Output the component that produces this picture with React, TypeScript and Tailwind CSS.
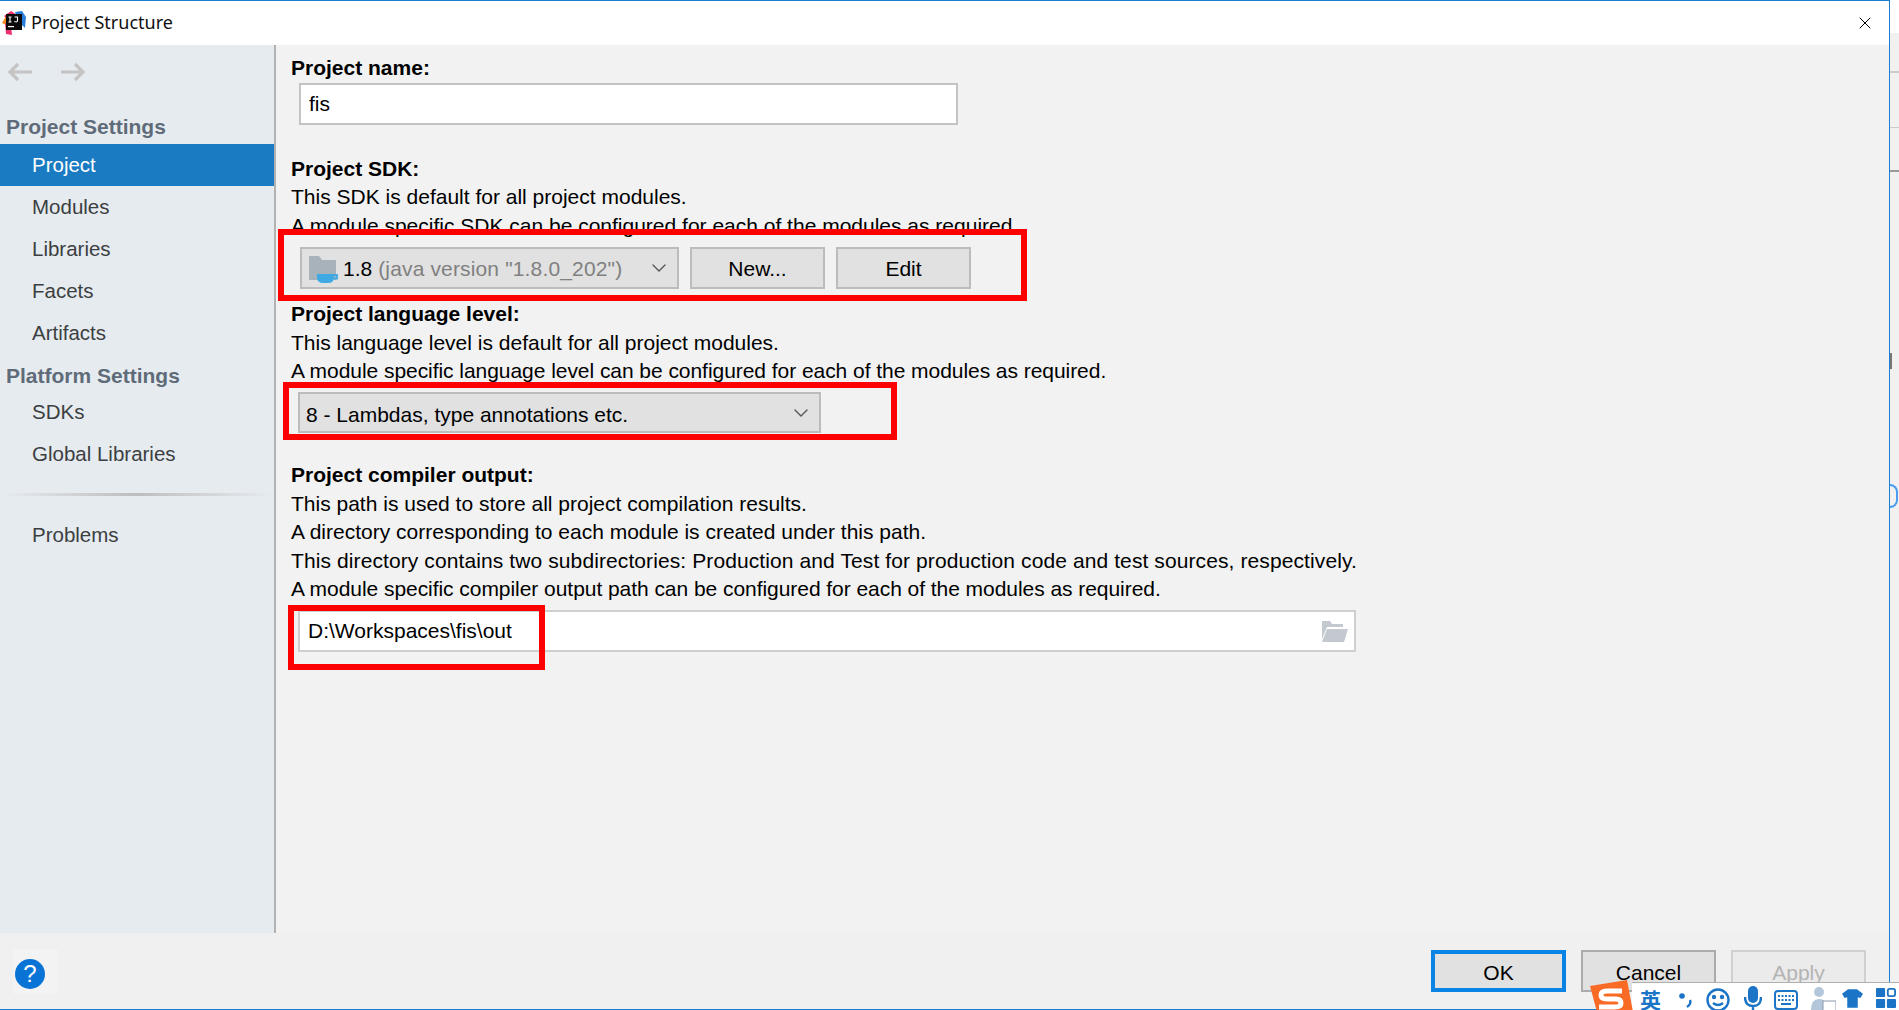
import React from "react";
import { ChevronDown, X } from "lucide-react";

const font = { fontFamily: '"Liberation Sans", Arial, sans-serif' };

function Arrow({ flip }: { flip?: boolean }) {
  return (
    <svg width="26" height="20" viewBox="0 0 26 20" className={flip ? "rotate-180" : ""} fill="none" stroke="#c4c4c4" strokeWidth="3.2">
      <path d="M25 10H3M11 2l-8 8 8 8" />
    </svg>
  );
}

function Logo() {
  return (
    <svg width="24" height="24" viewBox="0 0 24 24" className="shrink-0">
      <path d="M0 12 4 5l6 2-3 8z" fill="#f58a1f" />
      <path d="M2 5 9 0l6 4-8 6z" fill="#ef2f6b" />
      <path d="M13 1l7-1 4 6-1 11-6-6z" fill="#2a7fdc" />
      <path d="M3 12l6 4 1 8-6-1z" fill="#f0306e" />
      <rect x="4" y="3" width="16" height="16" fill="#0a0a0a" />
      <path d="M6.500 6h3M8 6v5M6.500 11h3M12.500 6h3v3.800q0 1.200-1.400 1.200t-1.500-1" fill="none" stroke="#fff" strokeWidth="1.1" />
      <rect x="6" y="15" width="6" height="1.200" fill="#fff" />
    </svg>
  );
}

function SideItem({ label, active }: { label: string; active?: boolean }) {
  return (
    <div className={`h-[42px] flex items-center pl-[32px] pt-[1px] text-[20.5px] ${active ? "bg-[#1a7bc2] text-white" : "text-[#3c3f41]"}`}>
      {label}
    </div>
  );
}

function SideHead({ label }: { label: string }) {
  return <div className="h-[35px] flex items-center pl-[6px] text-[21px] font-bold text-[#5f6b78]">{label}</div>;
}

function Combo({ className, children }: { className: string; children: React.ReactNode }) {
  return (
    <div className={`flex items-center border-2 border-[#bcbcbc] bg-[#e1e1e1] ${className}`}>
      {children}
      <ChevronDown size={24} strokeWidth={1.4} className="ml-auto mr-[6px] text-[#555]" />
    </div>
  );
}

function Btn({ className, children }: { className: string; children: React.ReactNode }) {
  return <div className={`flex items-center justify-center w-[135px] ${className}`}>{children}</div>;
}

const Para = ({ children, className = "" }: { children: React.ReactNode; className?: string }) => (
  <div className={`h-[28.5px] leading-[28.5px] whitespace-nowrap ${className}`}>{children}</div>
);
const Head = ({ children }: { children: React.ReactNode }) => <div className="h-[28.5px] leading-[28.5px] font-bold whitespace-nowrap">{children}</div>;

function Sogou() {
  return (
    <div className="absolute left-[1589px] top-[980px] w-[310px] h-[30px] flex items-start overflow-hidden">
      <svg width="44" height="32" viewBox="0 0 44 32" className="shrink-0 relative z-10">
        <path d="M1 6 38 0l6 32H8z" fill="#f96a24" />
        <path d="M33 11H18q-6 0-6 4t6 4h9q5 0 5 4t-6 4H10" fill="none" stroke="#fff" strokeWidth="5" />
      </svg>
      <div className="flex-1 h-[28px] mt-[2px] bg-white border-t border-[#b0b0b0] flex items-center -ml-[1px] relative">
        <span className="ml-[8px] w-[23px] text-[21px] font-bold text-[#1c74c6] leading-none mt-[6px]" style={{ fontFamily: '"Noto Sans CJK SC", sans-serif' }}>英</span>
        <svg width="15" height="20" viewBox="0 0 15 20" className="ml-[15px] shrink-0 mt-[5px]">
          <circle cx="4" cy="7" r="2.8" fill="#1c74c6" />
          <path d="M12 11q1.500 4-3 7" fill="none" stroke="#1c74c6" strokeWidth="2.4" />
        </svg>
        <svg width="24" height="26" viewBox="0 0 24 26" className="ml-[13px] shrink-0 mt-[7px]" fill="none" stroke="#1c74c6" strokeWidth="2.4">
          <circle cx="12" cy="13" r="10.5" />
          <circle cx="8" cy="10" r="1" fill="#1c74c6" />
          <circle cx="16" cy="10" r="1" fill="#1c74c6" />
          <path d="M7 16q5 4 10 0" />
        </svg>
        <svg width="18" height="26" viewBox="0 0 18 26" className="ml-[14px] shrink-0 mt-[3px]">
          <rect x="4" y="1" width="10" height="17" rx="5" fill="#1c74c6" />
          <path d="M1 12q0 9 8 9t8-9M9 21v5" fill="none" stroke="#1c74c6" strokeWidth="2.4" />
        </svg>
        <svg width="24" height="22" viewBox="0 0 24 22" className="ml-[12px] shrink-0 mt-[6px]" fill="none" stroke="#1c74c6" strokeWidth="2">
          <rect x="1" y="2" width="22" height="18" rx="3" />
          <path d="M4 7h16M4 11h16" strokeDasharray="2 1.5" />
          <path d="M7 15h10" />
        </svg>
        <svg width="26" height="26" viewBox="0 0 26 26" className="ml-[12px] shrink-0 mt-[4px]">
          <circle cx="9" cy="6" r="5" fill="#b4c6da" />
          <path d="M1 24q0-11 8-11 5 0 7 4v7z" fill="#b4c6da" />
          <rect x="13" y="15" width="13" height="10" fill="#fff" stroke="#8a9aac" />
        </svg>
        <svg width="21" height="22" viewBox="0 0 24 24" className="ml-[6px] shrink-0 mt-[3px]">
          <path d="M7 2h10l7 5-3 5-3-1v12H6V11l-3 1-3-5z" fill="#1c74c6" />
        </svg>
        <svg width="20" height="22" viewBox="0 0 22 22" className="ml-[13px] shrink-0 mt-[3px]" fill="#1c74c6">
          <rect x="0" y="0" width="10" height="10" rx="1" />
          <rect x="13" y="1" width="8" height="8" rx="2" fill="none" stroke="#1c74c6" strokeWidth="2" />
          <rect x="0" y="12" width="10" height="10" rx="1" />
          <rect x="12" y="12" width="10" height="10" rx="1" />
        </svg>
      </div>
    </div>
  );
}

export default function App() {
  return (
    <div className="relative w-[1899px] h-[1010px] overflow-hidden flex bg-[#f1f1f1] text-black" style={font}>
      <div className="w-[1890px] h-full flex flex-col border-t-[1px] border-r-[1px] border-b-[1px] border-[#1b7fd1] bg-[#f2f2f2]">
        <div className="h-[44px] shrink-0 bg-white flex items-center pl-[2px]">
          <Logo />
          <span className="ml-[5px] -mt-[2px] text-[18px] text-[#111]" style={{ fontFamily: '"Noto Sans", sans-serif' }}>Project Structure</span>
          <X size={20} strokeWidth={1.2} className="ml-auto mr-[14px] text-black" />
        </div>
        <div className="flex-1 flex min-h-0">
          <div className="w-[276px] shrink-0 bg-[#e6ebf0] border-r-2 border-[#b2b2b2] flex flex-col">
            <div className="h-[30px] mt-[12px] flex items-center pl-[7px] gap-[27px]">
              <Arrow />
              <Arrow flip />
            </div>
            <div className="mt-[22px]"><SideHead label="Project Settings" /></div>
            <SideItem label="Project" active />
            <SideItem label="Modules" />
            <SideItem label="Libraries" />
            <SideItem label="Facets" />
            <SideItem label="Artifacts" />
            <div className="mt-[4px]"><SideHead label="Platform Settings" /></div>
            <div className="-mt-[2px]"><SideItem label="SDKs" /></div>
            <SideItem label="Global Libraries" />
            <div className="mt-[18px] h-[3px] mx-[2px] bg-gradient-to-r from-transparent via-[#bdbdbd] to-transparent" />
            <div className="mt-[18px]"><SideItem label="Problems" /></div>
          </div>
          <div className="flex-1 pl-[15px] pt-[9px] text-[21px] leading-none">
            <Head>Project name:</Head>
            <div className="ml-[8px] w-[659px] h-[42px] bg-white border-2 border-[#c4c4c4] flex items-center pl-[8px]">fis</div>

            <div className="mt-[30px]">
              <Head>Project SDK:</Head>
              <Para>This SDK is default for all project modules.</Para>
              <Para>A module specific SDK can be configured for each of the modules as required.</Para>
            </div>
            <div className="mt-[6.5px] ml-[9px] flex gap-[11px]">
              <Combo className="w-[379px] h-[42px] pl-[7px]">
                <svg width="30" height="28" viewBox="0 0 30 28" className="shrink-0 mt-[4px]">
                  <path d="M0 0h10l3 4h14v20H0z" fill="#a8b2bb" />
                  <path d="M8 18h17v3q0 6-6 6h-5q-6 0-6-6z" fill="#3fa9e4" />
                  <path d="M25 19h3v3.500h-3" fill="none" stroke="#3fa9e4" strokeWidth="1.8" />
                </svg>
                <span className="ml-[4px] pt-[1px]">1.8</span>
                <span className="ml-[6px] pt-[1px] tracking-[0.15px] text-[#808080]">(java version "1.8.0_202")</span>
              </Combo>
              <Btn className="h-[42px] pt-[1px] border-2 border-[#bcbcbc] bg-[#e1e1e1]">New...</Btn>
              <Btn className="h-[42px] pt-[1px] border-2 border-[#bcbcbc] bg-[#e1e1e1]">Edit</Btn>
            </div>

            <div className="mt-[11.5px]">
              <Head>Project language level:</Head>
              <Para>This language level is default for all project modules.</Para>
              <Para className="tracking-[-0.05px]">A module specific language level can be configured for each of the modules as required.</Para>
            </div>
            <div className="mt-[6.5px] ml-[7px]">
              <Combo className="w-[523px] h-[41px] pl-[6px]"><span className="pt-[3px]">8 - Lambdas, type annotations etc.</span></Combo>
            </div>

            <div className="mt-[28px]">
              <Head>Project compiler output:</Head>
              <Para>This path is used to store all project compilation results.</Para>
              <Para>A directory corresponding to each module is created under this path.</Para>
              <Para className="tracking-[0.1px]">This directory contains two subdirectories: Production and Test for production code and test sources, respectively.</Para>
              <Para className="tracking-[-0.05px]">A module specific compiler output path can be configured for each of the modules as required.</Para>
            </div>
            <div className="mt-[6px] ml-[7px] w-[1058px] h-[42px] bg-white border-2 border-[#cfcfcf] flex items-center pl-[8px]">
              D:\Workspaces\fis\out
              <svg width="28" height="24" viewBox="0 0 28 24" className="ml-auto mr-[5px]">
                <path d="M1 2h8l2 3h11v3H6L1 20z" fill="#c3c9cf" />
                <path d="M6 10h21l-4 13H1z" fill="#c3c9cf" />
              </svg>
            </div>
          </div>
        </div>
        <div className="h-[76px] shrink-0 bg-[#f0f0f0] flex items-start text-[21px]">
          <div className="ml-[13px] mt-[16px] w-[45px] h-[45px] bg-[#f3f3f3] flex items-center pl-[2px] pt-[5px]">
            <div className="w-[30px] h-[30px] rounded-full bg-[#0a74d6] text-white text-[24px] flex items-center justify-center">?</div>
          </div>
          <div className="ml-auto mr-[23px] mt-[17px] flex gap-[15px]">
            <Btn className="h-[42px] pt-[3px] border-[4px] border-[#0a84e4] bg-[#e1e1e1]">OK</Btn>
            <Btn className="h-[42px] pt-[3px] border-2 border-[#ababab] bg-[#e1e1e1]">Cancel</Btn>
            <Btn className="h-[42px] pt-[3px] border-2 border-[#d0d0d0] bg-[#ebebeb] text-[#b4b4b4]">Apply</Btn>
          </div>
        </div>
      </div>
      <div className="flex-1 bg-[#f1f1f1] relative">
        <div className="absolute inset-x-0 top-0 h-[33px] bg-white" />
        <div className="absolute inset-x-0 top-[71px] h-[2px] bg-[#cccccc]" />
        <div className="absolute inset-x-0 top-[127px] h-[1px] bg-[#cccccc]" />
        <div className="absolute inset-x-0 top-[170px] h-[2px] bg-[#999999]" />
        <div className="absolute left-0 top-[353px] w-[2px] h-[16px] bg-[#777777]" />
        <div className="absolute left-0 top-[484px] w-[8px] h-[24px] rounded-r-full border-2 border-l-0 border-[#4a9df0]" />
      </div>

      <div className="absolute left-[278px] top-[229px] w-[749px] h-[72px] border-[6px] border-[#fe0000]" />
      <div className="absolute left-[283px] top-[382px] w-[614px] h-[58px] border-[6px] border-[#fe0000]" />
      <div className="absolute left-[288px] top-[605px] w-[257px] h-[65px] border-[6px] border-[#fe0000]" />
      <Sogou />
    </div>
  );
}
